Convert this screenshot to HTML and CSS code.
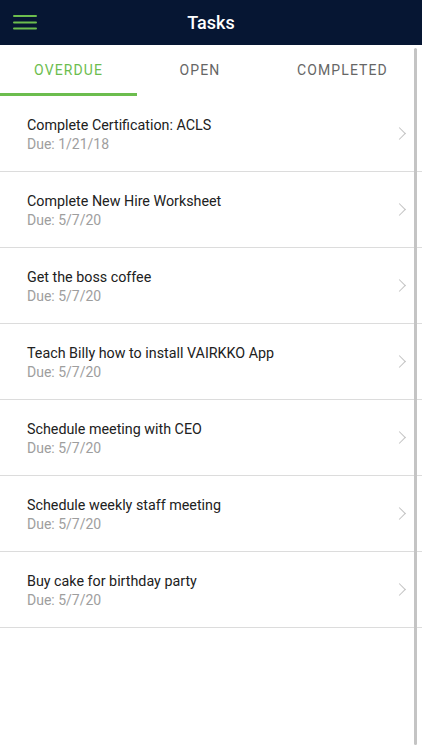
FILE: index.html
```html
<!DOCTYPE html>
<html lang="en">
<head>
  <meta charset="UTF-8">
  <title>Tasks</title>
  <link rel="stylesheet" href="styles.css">
</head>
<body>
<div class="app">
  <div class="header">
    <span class="menu">
      <svg width="24" height="16" viewBox="0 0 24 16">
        <rect x="0" y="0" width="24" height="2" rx="1" fill="#6cbd4e"/>
        <rect x="0" y="6.5" width="24" height="2" rx="1" fill="#6cbd4e"/>
        <rect x="0" y="12.5" width="24" height="2" rx="1" fill="#6cbd4e"/>
      </svg>
    </span>
    <h1>Tasks</h1>
  </div>
  <div class="tabs">
    <span class="tab current">OVERDUE</span>
    <span class="tab">OPEN</span>
    <span class="tab">COMPLETED</span>
  </div>
  <ul class="list">
    <li><div class="text"><p class="title">Complete Certification: ACLS</p><p class="due">Due: 1/21/18</p></div><i class="arrow"></i></li>
    <li><div class="text"><p class="title">Complete New Hire Worksheet</p><p class="due">Due: 5/7/20</p></div><i class="arrow"></i></li>
    <li><div class="text"><p class="title">Get the boss coffee</p><p class="due">Due: 5/7/20</p></div><i class="arrow"></i></li>
    <li><div class="text"><p class="title">Teach Billy how to install VAIRKKO App</p><p class="due">Due: 5/7/20</p></div><i class="arrow"></i></li>
    <li><div class="text"><p class="title">Schedule meeting with CEO</p><p class="due">Due: 5/7/20</p></div><i class="arrow"></i></li>
    <li><div class="text"><p class="title">Schedule weekly staff meeting</p><p class="due">Due: 5/7/20</p></div><i class="arrow"></i></li>
    <li><div class="text"><p class="title">Buy cake for birthday party</p><p class="due">Due: 5/7/20</p></div><i class="arrow"></i></li>
  </ul>
  <div class="scrollbar"></div>
</div>
</body>
</html>
```

FILE: styles.css
```css
* {
  margin: 0;
  padding: 0
}
ul {
  list-style: none
}
body {
  font-family: Roboto, "Liberation Sans", sans-serif;
  background-color: #fff;
}
.app {
  width: 422px;
  height: 750px;
  position: relative;
  overflow: hidden;
}
.header {
  height: 45px;
  background-color: #061633;
  display: flex;
  align-items: center;
  justify-content: center;
  position: relative;
}
.header h1 {
  font-size: 18px;
  font-weight: 500;
  color: #fff;
}
.menu {
  position: absolute;
  left: 13px;
  top: 15px;
  line-height: 0;
}
.tabs {
  display: flex;
  height: 51px;
}
.tab {
  display: flex;
  align-items: center;
  justify-content: center;
  font-size: 14px;
  letter-spacing: 1.1px;
  color: #666;
  padding-top: 2px;
  border-bottom: 3px solid transparent;
}
.tab:nth-child(1) {
  width: 137px;
}
.tab:nth-child(2) {
  width: 126px;
}
.tab:nth-child(3) {
  flex: 1;
}
.tab.current {
  color: #6cbd4e;
  border-bottom-color: #6cbd4e;
}
.list li {
  height: 75px;
  border-bottom: 1px solid #dcdcdc;
  display: flex;
  align-items: center;
  padding: 0 16px 0 27px;
}
.list .text {
  flex: 1;
  padding-top: 3px;
}
.title {
  font-size: 14.3px;
  color: #212121;
  line-height: 19px;
}
.due {
  font-size: 14px;
  color: #9e9e9e;
  line-height: 19px;
}
.arrow {
  width: 8px;
  height: 8px;
  border-top: 1.5px solid #c2c2c2;
  border-right: 1.5px solid #c2c2c2;
  transform: rotate(45deg);
  margin-right: 2px;
}
.scrollbar {
  position: absolute;
  left: 414px;
  top: 48px;
  width: 3px;
  height: 697px;
  border-radius: 2px;
  background-color: #c4c4c4;
}
```
